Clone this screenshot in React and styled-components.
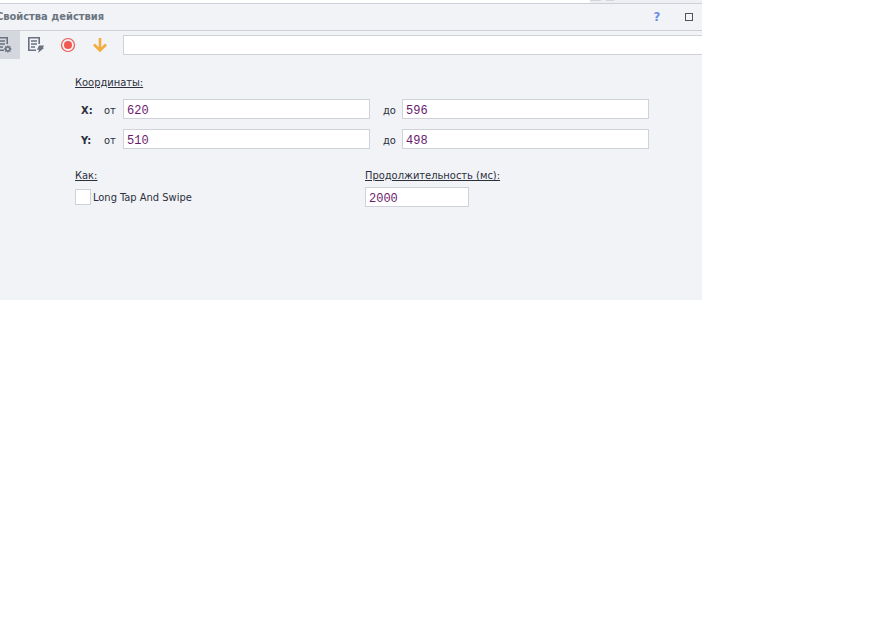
import React from "react";
import styled, { createGlobalStyle } from "styled-components";

const GlobalStyle = createGlobalStyle`
  *, *::before, *::after { box-sizing: border-box; }
  body {
    margin: 0;
    background: #ffffff;
    color: #2b303b;
    font: 11px/14px "DejaVu Sans Condensed", "DejaVu Sans", Tahoma, sans-serif;
  }
  button, input { font: inherit; color: inherit; }
`;

const Screen = styled.div`
  display: grid;
  grid-template-columns: 702fr 183fr;
`;

const Panel = styled.main`
  min-width: 0;
  overflow: hidden;
  background: #f1f3f7;
`;

const TopStrip = styled.div`
  display: flex;
  justify-content: flex-end;
  height: 3px;
  padding-right: 88px;
  background: linear-gradient(to right, #ffffff 84%, #eeeff2 84%);
`;

const StripMark = styled.span`
  width: 24px;
  height: 1px;
  border-left: 11px solid #d3d5d9;
  border-right: 8px solid #d3d5d9;
`;

const TitleBar = styled.header`
  display: flex;
  align-items: center;
  height: 28px;
  padding-right: 8px;
  border-top: 1px solid #cdd0d7;
  border-bottom: 1px solid #cdd0d7;
`;

const Title = styled.h1`
  flex: 1;
  margin: 0 0 0 -4px;
  font-size: 11px;
  line-height: 14px;
  font-weight: 700;
  color: #6b7480;
`;

const WindowButton = styled.button`
  display: grid;
  place-items: center;
  width: 10px;
  height: 16px;
  margin-left: 22px;
  padding: 0;
  border: 0;
  background: transparent;
  color: #6b8ee6;
  font-size: 13px;
  font-weight: 700;
`;

const Toolbar = styled.div`
  display: flex;
  align-items: center;
  height: 28px;
`;

const ToolButton = styled.button`
  display: flex;
  flex: none;
  align-items: center;
  justify-content: center;
  width: 32px;
  height: 28px;
  margin-left: ${(p) => (p.$active ? "-12px" : "0")};
  padding: 0;
  border: 0;
  background: ${(p) => (p.$active ? "#d4d7de" : "transparent")};
`;

const TextBox = styled.input`
  flex: ${(p) => (p.$fixed ? "none" : "1")};
  width: ${(p) => (p.$fixed ? "104px" : "0")};
  min-width: 0;
  height: 20px;
  padding: 4px 3px 0;
  border: 1px solid #cfd2d9;
  border-radius: 0;
  background: #ffffff;
  color: #6a1a6e;
  font-family: "Liberation Mono", "Courier New", monospace;
  font-size: 12px;
  outline: none;
`;

const CommandBox = styled(TextBox)`
  margin-left: 7px;
  border-right: 0;
`;

const Form = styled.form`
  display: flex;
  flex-direction: column;
  padding: 17px 53px 93px 75px;
`;

const Legend = styled.h2`
  margin: 0;
  font-size: 11px;
  line-height: 14px;
  font-weight: 400;
  text-decoration: underline;
  text-underline-offset: 1px;
`;

const Coordinates = styled.section`
  display: flex;
  flex-direction: column;
`;

const AxisRow = styled.div`
  display: flex;
  align-items: center;
  margin-top: 9px;
  & + & { margin-top: 10px; }
`;

const Axis = styled.strong`
  width: 29px;
  padding: 3px 0 0 6px;
`;

const Bound = styled.label`
  width: ${(p) => (p.$second ? "32px" : "19px")};
  padding: 3px 0 0 ${(p) => (p.$second ? "13px" : "0")};
`;

const Options = styled.section`
  display: grid;
  grid-template-columns: 290fr 284fr;
  margin-top: 20px;
`;

const Option = styled.div`
  display: flex;
  flex-direction: column;
  align-items: flex-start;
  gap: 4px;
`;

const CheckLabel = styled.label`
  display: flex;
  align-items: center;
  gap: 2px;
  height: 20px;
`;

const CheckText = styled.span`
  padding-top: 1px;
`;

const CheckBox = styled.input`
  appearance: none;
  width: 16px;
  height: 16px;
  margin: 0;
  border: 1px solid #cfd2d9;
  background: #ffffff;
  &:checked { background: #6b7480; }
`;

const Sheet = () => (
  <path d="M12.2 8V1.8H1.8v12.4H9M4 5h6M4 8h6M4 11h4" fill="none" stroke="#6a7180" strokeWidth="1.6" />
);

const GearSheet = () => (
  <svg width="18" height="18" viewBox="0 0 18 18" aria-hidden="true">
    <Sheet />
    <circle cx="12.8" cy="13" r="2" fill="none" stroke="#6a7180" strokeWidth="1.6" />
    <path d="M12.8 9.4v1.6M12.8 15v1.6M9.2 13h1.6M14.8 13h1.6M10.2 10.4l1.2 1.2M14.2 14.4l1.2 1.2M15.4 10.4l-1.2 1.2M11.4 14.4l-1.2 1.2" stroke="#6a7180" strokeWidth="1.3" />
  </svg>
);

const BoltSheet = () => (
  <svg width="18" height="18" viewBox="0 0 18 18" aria-hidden="true">
    <Sheet />
    <path d="M12 9.5h5l-1 2.5h1l-6 5 1-3.2h-2z" fill="#6a7180" />
  </svg>
);

const RecordIcon = () => (
  <svg width="16" height="16" viewBox="0 0 16 16" aria-hidden="true">
    <circle cx="8" cy="8" r="6.5" fill="none" stroke="#f2574f" strokeWidth="1.2" />
    <circle cx="8" cy="8" r="4" fill="#f2574f" />
  </svg>
);

const DownIcon = () => (
  <svg width="16" height="16" viewBox="0 0 16 16" aria-hidden="true">
    <path d="M8 1v12M2 7.5l6 6 6-6" fill="none" stroke="#f3ad3d" strokeWidth="2.6" />
  </svg>
);

const MaximizeIcon = () => (
  <svg width="8" height="8" viewBox="0 0 8 8" aria-hidden="true">
    <rect x="0.5" y="0.5" width="7" height="7" fill="none" stroke="#50545c" />
  </svg>
);

const AXES = [
  { name: "X", from: "620", to: "596" },
  { name: "Y", from: "510", to: "498" },
];

export default function App() {
  return (
    <Screen>
      <GlobalStyle />
      <Panel>
        <TopStrip><StripMark /></TopStrip>
        <TitleBar>
          <Title>Свойства действия</Title>
          <WindowButton type="button" aria-label="Справка">?</WindowButton>
          <WindowButton type="button" aria-label="Развернуть"><MaximizeIcon /></WindowButton>
        </TitleBar>
        <Toolbar>
          <ToolButton type="button" $active aria-label="Настройки"><GearSheet /></ToolButton>
          <ToolButton type="button" aria-label="События"><BoltSheet /></ToolButton>
          <ToolButton type="button" aria-label="Запись"><RecordIcon /></ToolButton>
          <ToolButton type="button" aria-label="Вниз"><DownIcon /></ToolButton>
          <CommandBox type="text" aria-label="Комментарий" />
        </Toolbar>
        <Form>
          <Coordinates>
            <Legend>Координаты:</Legend>
            {AXES.map(({ name, from, to }) => (
              <AxisRow key={name}>
                <Axis>{name}:</Axis>
                <Bound htmlFor={`${name}-from`}>от</Bound>
                <TextBox id={`${name}-from`} type="text" defaultValue={from} />
                <Bound $second htmlFor={`${name}-to`}>до</Bound>
                <TextBox id={`${name}-to`} type="text" defaultValue={to} />
              </AxisRow>
            ))}
          </Coordinates>
          <Options>
            <Option>
              <Legend>Как:</Legend>
              <CheckLabel><CheckBox type="checkbox" /><CheckText>Long Tap And Swipe</CheckText></CheckLabel>
            </Option>
            <Option>
              <Legend as="label" htmlFor="duration">Продолжительность (мс):</Legend>
              <TextBox id="duration" type="text" $fixed defaultValue="2000" />
            </Option>
          </Options>
        </Form>
      </Panel>
    </Screen>
  );
}
